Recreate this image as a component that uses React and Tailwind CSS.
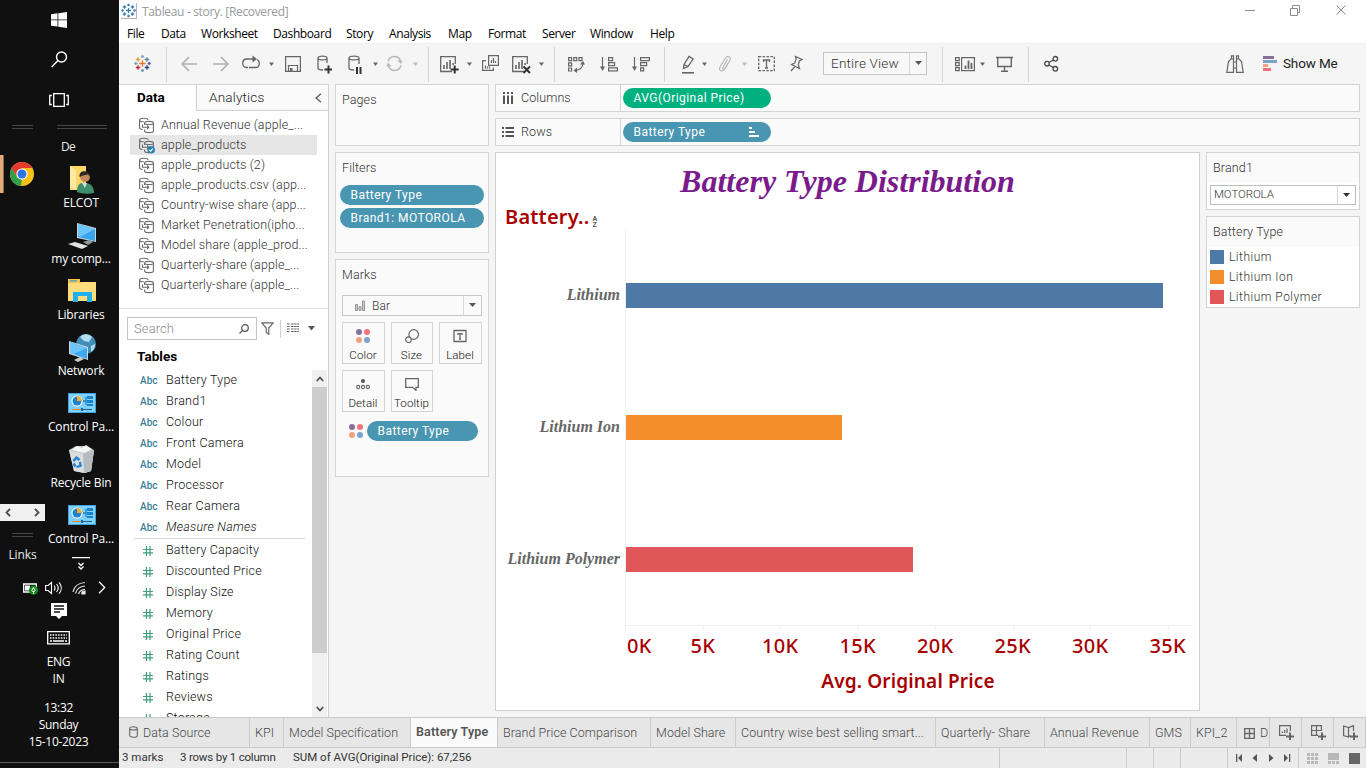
import React from "react";

const Svg = ({ w, h = 20, className = "", children, stroke = "#666", sw = 1.3, fill = "none" }) => (
  <svg width={w} height={h} viewBox={`0 0 ${w} ${h}`} fill={fill} stroke={stroke} strokeWidth={sw} className={`shrink-0 ${className}`}>
    {children}
  </svg>
);

const Caret = ({ className, color = "#666" }) => (
  <Svg w={5} className={className} stroke="none" fill={color}>
    <path d="M0 8.5h5L2.5 12z" />
  </Svg>
);

const Sep = ({ className }) => <div className={`-mt-[7px] h-[35px] w-px shrink-0 bg-[#d4d4d4] ${className}`} />;

/* ---------- Windows taskbar ---------- */

const MonitorShape = () => (
  <g stroke="none">
    <path d="M10 3l19 5v14l-19-4z" fill="#c9d2d8" />
    <path d="M11 4l17 5v12l-17-4z" fill="#35a5ef" />
    <path d="M11 4l17 5-15 8-2-1z" fill="#6cc4fb" />
    <path d="M16 22l6-2 4 2-5 3z" fill="#8d989e" />
    <path d="M1 24l7-2 13 4-6 3z" fill="#dfe3e6" />
  </g>
);

const desktopIcons = {
  user: (
    <g stroke="none">
      <path d="M3 2h16v24H3z" fill="#fbd867" />
      <path d="M3 2l6 4v20l-6-3z" fill="#ffeaa0" />
      <circle cx="18" cy="13" r="5" fill="#c08a5c" />
      <path d="M12.500 13c-1-8 11-7 10.500 0l-2-2.500-5 1z" fill="#2f2a26" />
      <path d="M10 28c0-7 3-10 8-9 6 0 9 4 9 10-5 1-12 1-17-1z" fill="#3f8f6d" />
      <path d="M15 19l3 5 2-5z" fill="#d8ded8" />
    </g>
  ),
  computer: <MonitorShape />,
  folder: (
    <g stroke="none">
      <path d="M1 3h12v3h16v19H1z" fill="#f5c644" />
      <path d="M1 7h12l2-1h14v19H1z" fill="#fddd7d" />
      <path d="M3 4h7v1.500H3z" fill="#56a5d8" />
      <path d="M6 16h19v10h-5v-6h-9v6H6z" fill="#1fb0f0" />
    </g>
  ),
  network: (
    <g stroke="none">
      <circle cx="19" cy="12" r="10" fill="#3f8fb9" />
      <path d="M13 5c4-4 9-3 12 0l-3 5-5-1zM24 14l4-2c0 3-1 6-4 8z" fill="#b3dcef" />
      <path d="M2 9l19 6v13L2 22z" fill="#cfd8dc" />
      <path d="M3 10l17 6v11L3 21z" fill="#3aa8f2" />
      <path d="M3 10l17 6-13 6-4-1z" fill="#6bc4fa" />
      <path d="M7 28l6-3 4 2-6 3z" fill="#c5ccd0" />
    </g>
  ),
  control: (
    <g stroke="none">
      <path d="M1 5h28v20H1z" fill="#3fa4e0" />
      <path d="M2 6h26v18H2z" fill="#7fd0fa" />
      <circle cx="10" cy="13" r="5.500" fill="#fff" />
      <circle cx="10" cy="13" r="4.500" fill="#1c84cf" />
      <path d="M10 13V8a5 5 0 0 1 5 5z" fill="#f7a928" />
      <path d="M20 8h6v3h-6zm0 4h6v3h-6zm0 4h6v2h-6z" fill="#1c84cf" />
      <path d="M16 13h3v-4M19 12v5" stroke="#1c84cf" fill="none" />
      <path d="M5 21h9v1H5z" fill="#f08a1d" />
      <path d="M16 21h9v1h-9zM14 20h2v3h-2z" fill="#1464b0" />
    </g>
  ),
  bin: (
    <g stroke="none">
      <path d="M2 6l7-4 9 0 9 4-3 21-6 2-11-2z" fill="#c3c8cb" />
      <path d="M2 6l14 4 11-4-3 21-7 2-10-2z" fill="#dadddf" />
      <path d="M16 10l11-4-3 21-7 2z" fill="#b7bcc0" />
      <path d="M5 6l5-4 5 2 4-3 6 4-8 4z" fill="#f4f5f5" />
      <path d="M6.500 17l3-3.500 3 2.500M13 18l.5 4-4 1M8.500 22.500L6.500 19.500" stroke="#1f7fd1" strokeWidth="2.300" fill="none" />
    </g>
  ),
};

const desktop = [
  ["user", "ELCOT"],
  ["computer", "my comp..."],
  ["folder", "Libraries"],
  ["network", "Network"],
  ["control", "Control Pa..."],
  ["bin", "Recycle Bin"],
  ["control", "Control Pa..."],
];

const Grip = ({ className }) => <div className={`h-1 shrink-0 border-y border-[#454545] ${className}`} />;

function Taskbar() {
  return (
    <aside className="flex h-[768px] w-[119px] shrink-0 flex-col overflow-hidden bg-[#101010] font-['Open_Sans','Noto_Sans',sans-serif] text-[12px] text-white">
      <div className="flex h-[118px] shrink-0 flex-col items-center pt-[12px] pr-[1px]">
        <Svg w={16} h={16} stroke="none" fill="#fff">
          <path d="M0 2.300L6.500 1.300v6.200H0zM7.300 1.200L16 0v7.500H7.300zM0 8.300h6.500v6.300L0 13.700zM7.300 8.300H16V16l-8.700-1.200z" />
        </Svg>
        <Svg w={17} h={17} stroke="#fff" sw={1.400} className="mt-[23px]">
          <circle cx="10.500" cy="6" r="5" />
          <path d="M7 9.500L.7 16" />
        </Svg>
        <Svg w={20} h={14} stroke="#fff" className="mt-[25px]">
          <path d="M4.700.7h10.600v12.600H4.700zM2.800 2.500H.7v9h2.100M17.200 2.500h2.100v9h-2.100" />
        </Svg>
      </div>
      <div className="flex h-[458px] shrink-0">
        <div className="flex w-[43px] shrink-0 flex-col pt-[7px]">
          <Grip className="ml-3 w-[21px]" />
          <div className="mt-[26px] flex h-[38px] items-center">
            <div className="h-full w-[4px] border-r border-[#8a6a4c] bg-[#e0ab78]" />
            <Svg w={24} h={24} stroke="none" className="ml-[6px]">
              <circle cx="12" cy="12" r="12" fill="#fbc116" />
              <path d="M1.600 6A12 12 0 0 1 22.400 6H12L6.800 15z" fill="#e53b2e" />
              <path d="M1.600 6L6.800 15 12 18l-1 6A12 12 0 0 1 1.600 6z" fill="#2ca14c" />
              <path d="M11.300 24L17.200 15 12 18z" fill="#fbc116" />
              <circle cx="12" cy="12" r="5.600" fill="#fff" />
              <circle cx="12" cy="12" r="4.500" fill="#2a75e6" />
            </Svg>
          </div>
          <div className="mt-[311px] flex h-[17px] w-[45px] shrink-0 items-center justify-between bg-[#f0f0f0] px-[5px]">
            <Svg w={6} h={9} stroke="#505050" sw={1.900}><path d="M5 .8L1.500 4.500 5 8.200" /></Svg>
            <Svg w={6} h={9} stroke="#505050" sw={1.900}><path d="M1 .8l3.500 3.700L1 8.200" /></Svg>
          </div>
          <Grip className="ml-3 mt-[12px] w-[21px]" />
          <div className="mt-[9px] ml-[2px] text-center leading-[18px] tracking-[-0.1px] text-[#e8e8e8]">Links</div>
        </div>
        <div className="flex w-[76px] shrink-0 flex-col pt-[7px]">
          <Grip className="ml-[14px] w-[50px]" />
          <div className="mt-[9px] ml-[18px] whitespace-nowrap leading-[18px] tracking-[-0.6px] text-[#e8e8e8]">De</div>
          {desktop.map(([icon, label], i) => (
            <div key={i} className="flex h-[56px] shrink-0 flex-col items-center pt-[8px]">
              <Svg w={30} h={30} className="ml-[2px]">{desktopIcons[icon]}</Svg>
              <div className="whitespace-nowrap leading-[17px] tracking-[-0.15px]">{label}</div>
            </div>
          ))}
          <div className="flex flex-col items-center pt-[9px]">
            <Svg w={18} h={15} stroke="#fff"><path d="M0 .7h18M6.500 6l2.500 2.500L11.500 6M6.500 9.500L9 12l2.500-2.500" /></Svg>
          </div>
        </div>
      </div>
      <div className="flex h-[23px] shrink-0 items-center pl-[23px]">
        <Svg w={16} h={14} stroke="#fff">
          <path d="M.7 3h12.600v8H.7z" /><path d="M2 4.500h5v5H2z" fill="#fff" stroke="none" />
          <circle cx="10.500" cy="9.200" r="4.600" fill="#118a1c" stroke="none" />
          <path d="M10.500 6.500l1.800 3-1.800 1.500-1.800-1.500zM10.500 10v3" strokeWidth="1" />
        </Svg>
        <Svg w={17} h={14} stroke="#fff" sw={1.100} className="ml-[6px]">
          <path d="M.6 4.500h2.600L6.500 1.500v11L3.200 9.500H.6zM9 4.500c1.300 1.500 1.300 3.500 0 5M11.500 3c2.200 2.500 2.200 5.500 0 8M14 1.300c3 3.500 3 8 0 11.400" />
        </Svg>
        <Svg w={14} h={14} stroke="#ddd" sw={1.200} className="ml-[10px]">
          <path d="M1 11C2 6 6 2 13 1.500M3.500 12.500c1-4 4-7 9.500-7.500M6.500 13c.7-2.500 3-4.300 6.500-4.600M9.500 13c.5-1 1.500-1.500 3.500-1.700" /><path d="M10 13v-2l3-1v3z" fill="#fff" />
        </Svg>
        <Svg w={8} h={13} stroke="#fff" sw={1.300} className="ml-[12px]"><path d="M1 .8l5.700 5.700L1 12.200" /></Svg>
      </div>
      <div className="flex flex-1 flex-col items-center pt-[4px]">
        <Svg w={16} h={16} stroke="none" fill="#fff" className="mr-[1px]">
          <path d="M0 0h16v13h-5l-3 3-3-3H0z" /><path d="M3 3h10M3 6h10M3 9h6" stroke="#101010" />
        </Svg>
        <Svg w={23} h={14} stroke="#fff" className="mt-[12px] mr-[2px]">
          <path d="M.7.7h21.600v12.100H.7z" /><path d="M3 4h17M3 7h17" strokeDasharray="1.500 1.200" /><path d="M3 10h2M6 10h11M18 10h2" />
        </Svg>
        <div className="mt-[8px] mr-[2px] text-center leading-[17px] tracking-[-0.3px]">ENG<br />IN</div>
        <div className="mt-[12px] mr-[2px] text-center leading-[17px] tracking-[-0.3px]">13:32<br />Sunday<br />15-10-2023</div>
        <div className="mt-[12px] h-px w-full bg-[#5a5a5a]" />
      </div>
    </aside>
  );
}

/* ---------- Window chrome ---------- */

const Plus = ({ x, y, s = 2.5, c }) => <path d={`M${x - s} ${y}h${2 * s}M${x} ${y - s}v${2 * s}`} stroke={c} />;

function TitleBar() {
  const c = "#3c7fb1";
  return (
    <header className="flex h-[24px] shrink-0 items-start bg-white">
      <div className="ml-[2px] mt-[3px] flex h-4 w-4 items-center justify-center border-r border-b border-[#b5b5b5]">
        <Svg w={15} h={15} sw={1.3}>
          <Plus x={7.5} y={7.5} s={2.5} c={c} />
          <Plus x={3.5} y={4} s={1.7} c={c} /><Plus x={11.500} y={4} s={1.7} c={c} />
          <Plus x={3.5} y={11} s={1.7} c={c} /><Plus x={11.500} y={11} s={1.7} c={c} />
          <Plus x={7.5} y={2} s={1.3} c={c} /><Plus x={7.5} y={13} s={1.3} c={c} />
          <Plus x={1.5} y={7.5} s={1.3} c={c} /><Plus x={13.500} y={7.5} s={1.3} c={c} />
        </Svg>
      </div>
      <div className="ml-[5px] mt-[3px] font-['Open_Sans',sans-serif] text-[12px] leading-[18px] tracking-[-0.33px] text-[#999]">Tableau - story. [Recovered]</div>
      <Svg w={104} h={14} stroke="#8a8a8a" sw={1} className="ml-auto mr-[18px] mt-[4px]">
        <path d="M1 6.500h10M46.500 4.500h7v7h-7zM48.500 4.500v-3h7v7h-2M92.500 1.500l9 9M101.500 1.500l-9 9" />
      </Svg>
    </header>
  );
}

const menus = [
  ["File", "w-[34px]"], ["Data", "w-[40px]"], ["Worksheet", "w-[72px]"], ["Dashboard", "w-[73px]"], ["Story", "w-[43px]"],
  ["Analysis", "w-[59px]"], ["Map", "w-[40px]"], ["Format", "w-[54px]"], ["Server", "w-[48px]"], ["Window", "w-[60px]"], ["Help", "w-[40px]"],
];

const ChartBox = () => (
  <>
    <path d="M12 17.500H.7V2.600h14.600V10" />
    <path d="M4 15v-4M7 15V8M10 15V6M13 11V9" strokeWidth="1.600" />
  </>
);

function Toolbar() {
  return (
    <div className="flex h-[41px] shrink-0 items-start border-t border-[#eeeeee] bg-[#f5f5f5] pt-[10px]">
      <Svg w={17} className="ml-[15px]" sw={1.3}>
        <Plus x={8.5} y={9.500} s={3.2} c="#e8762c" />
        <Plus x={4} y={5.500} s={2.2} c="#e8a03c" /><Plus x={13} y={5.500} s={2.2} c="#5b879b" />
        <Plus x={4} y={13.500} s={2.2} c="#c72035" /><Plus x={13} y={13.500} s={2.2} c="#1f457e" />
        <Plus x={8.5} y={2.500} s={1.6} c="#8aa5c0" /><Plus x={8.5} y={16.500} s={1.6} c="#7199a6" />
        <Plus x={1.8} y={9.500} s={1.6} c="#6da5b8" /><Plus x={15.200} y={9.500} s={1.6} c="#59579b" />
      </Svg>
      <Sep className="ml-[15px]" />
      <Svg w={16} className="ml-[14px]" stroke="#b0b0b0" sw={1.700}><path d="M16 10H1.500M8 3L1.200 10 8 17" /></Svg>
      <Svg w={16} className="ml-[16px]" stroke="#b0b0b0" sw={1.700}><path d="M0 10h14.500M8 3l6.800 7L8 17" /></Svg>
      <Svg w={18} className="ml-[13px]"><path d="M6 13.500H4.500c-5 0-5-8.500 0-8.500H13M15 5.500c3.500 1.500 3 8-1.500 8H7" /><path d="M10.500 1.500l4.500 3.500-4.500 3.500z" fill="#666" stroke="none" /></Svg>
      <Caret className="ml-[9px]" />
      <Svg w={16} className="ml-[11px]" sw={1.2}><path d="M.6 2.600h14.800v14.800H.6zM3.500 17v-5.500h9V17" /><path d="M5 14h2.500v3H5z" fill="#666" stroke="none" /></Svg>
      <Svg w={15} className="ml-[16px]">
        <path d="M10 9V4c0-2.500-9-2.500-9 0v10c0 1.500 3 2 5 2M1 4c0 2.500 9 2.500 9 0" /><path d="M11.500 11.500v8M7.500 15.500h8" stroke="#333" strokeWidth="2" />
      </Svg>
      <Svg w={14} className="ml-[16px]">
        <path d="M11 10V4C11 1.500 1 1.500 1 4v10c0 1.500 2 2 5 2M1 4c0 2.500 10 2.500 10 0" /><path d="M9 13v7M12.500 13v7" stroke="#333" strokeWidth="2" />
      </Svg>
      <Caret className="ml-[11px]" />
      <Svg w={17} className="ml-[8px]" stroke="#b8b8b8" sw={1.5}>
        <path d="M2 7.500C4 1 12.500 1 14.500 7M15 11.500C13 18 4.500 18 2.500 12" /><path d="M11.500 6.500h5L15 10zM.5 12.500L2 8.500l3.500 4z" fill="#b8b8b8" stroke="none" />
      </Svg>
      <Caret className="ml-[10px]" color="#bbb" />
      <Sep className="ml-[10px]" />
      <Svg w={19} className="ml-[11px]"><ChartBox /><path d="M14.700 11.500v8M10.700 15.500h8" stroke="#333" strokeWidth="2" /></Svg>
      <Caret className="ml-[8px]" />
      <Svg w={17} className="ml-[10px]" sw={1.2}>
        <path d="M6.600 1.600h9.800v9.800H6.600zM4 6.600H.6v9.800h10.800V13.500M9.500 9V6M11.500 9V4M13.500 9V7M3.500 14.500v-3M5.500 14.500v-2M7.500 14.500v-2" />
      </Svg>
      <Svg w={19} className="ml-[13px]"><ChartBox /><path d="M11.500 12.500l6.500 6.500M18 12.500L11.500 19" stroke="#333" strokeWidth="2" /></Svg>
      <Caret className="ml-[8px]" />
      <Sep className="ml-[10px]" />
      <Svg w={17} className="ml-[13px]" sw={1.2}>
        <path d="M.6 3.600h3v3h-3zM5.800 3.600h3v3h-3zM11 3.600h3v3h-3zM.6 8.800h3v3h-3zM.6 14h3v3h-3zM7 16.500c4 0 8-3 8-7" />
        <path d="M12 10.500l3-3.500 2 3.500zM9 13.500L5.500 16.500 9 19z" fill="#666" stroke="none" />
      </Svg>
      <Svg w={18} className="ml-[15px]" sw={1.2}>
        <path d="M2.500 3v12M8.600 3.600h4v3h-4zM8.600 8.600h6v3h-6zM8.600 13.800h8.800v3H8.600z" /><path d="M0 12.500h5L2.500 17z" fill="#666" stroke="none" />
      </Svg>
      <Svg w={18} className="ml-[14px]" sw={1.2}>
        <path d="M2.500 3v12M8.600 3.600h8.800v3H8.600zM8.600 8.600h6v3h-6zM8.600 13.800h3v3h-3z" /><path d="M0 12.500h5L2.500 17z" fill="#666" stroke="none" />
      </Svg>
      <Sep className="ml-[14px]" />
      <Svg w={13} className="ml-[16px]"><path d="M2.500 14.500L3 10.500 8 2.500 12 5 7 12.500zM3 10.500l4 2" /><path d="M1 18.800h12" strokeWidth="1.600" /></Svg>
      <Caret className="ml-[8px]" />
      <Svg w={13} className="ml-[11px]" stroke="#b8b8b8" sw={1.2}><path d="M9.500 5L5 13.500c-1 2 1.500 2.500 2.300 1L12 6c1.300-3-2.500-5-4.500-2L2 13c-2 4 2.500 5 4.300 2.500L10 9" /></Svg>
      <Caret className="ml-[11px]" color="#bbb" />
      <Svg w={17} className="ml-[11px]"><path d="M.7 2.700h15.600v14H.7z" strokeDasharray="2.500 1.400" /><path d="M5.500 8V6h6v2M8.500 6v8M7 14h3" /></Svg>
      <Svg w={13} className="ml-[15px]" sw={1.2}><path d="M5.500 2.500l6.500 3-2.700 1.500-1 4 1.200 3.500-8-4 3.200-1.500 1.500-4zM5 12.500L1 17" /></Svg>
      <div className="-mt-[2px] ml-[20px] flex h-[23px] w-[104px] shrink-0 items-center border border-[#c4c4c4] bg-[#f8f8f8]">
        <span className="w-[85px] pl-[7px] text-[13.5px] leading-none font-light tracking-[0.2px] text-[#333]">Entire View</span>
        <span className="flex h-full flex-1 items-center justify-center border-l border-[#d8d8d8]">
          <Svg w={7} h={5} stroke="none" fill="#555"><path d="M0 0h7L3.500 4z" /></Svg>
        </span>
      </div>
      <Sep className="ml-[15px]" />
      <Svg w={20} className="ml-[12px]" sw={1.2}>
        <path d="M.6 3.600h3.600v3H.6zM.6 8.600h3.600v3H.6zM.6 13.600h3.600v3H.6zM6.600 3.600h12.800v13H6.600z" /><path d="M10.500 15v-3.500M13.500 15V6.500M16.500 15V9" strokeWidth="1.800" />
      </Svg>
      <Caret className="ml-[5px]" />
      <Svg w={17} className="ml-[11px]" sw={1.4}><path d="M0 3.500h17M1.700 3.500v9h13.600v-9M8.500 12.500v5M5 17.300h7" /></Svg>
      <Sep className="ml-[15px]" />
      <Svg w={15} className="ml-[15px]" stroke="#4a4a4a" sw={1.3}><circle cx="3" cy="9.700" r="2.300" /><circle cx="11.300" cy="4.800" r="2.300" /><circle cx="11.300" cy="14.800" r="2.300" /><path d="M5 8.500l4.300-2.500M5 11l4.300 2.500" /></Svg>
      <Svg w={18} className="ml-[167px]" sw={1.2}>
        <path d="M.8 18.300L2.500 7.500 5 5h2.500v13.300zM17.200 18.300L15.500 7.500 13 5h-2.500v13.300zM5.500 5V1.800h2V5M12.500 5V1.800h-2V5M7.500 8h3M7.500 14h3" />
      </Svg>
      <Svg w={14} className="ml-[19px]" stroke="none">
        <path d="M0 2h11v3H0z" fill="#87709b" /><path d="M0 6h14v3H0z" fill="#7ba3ce" /><path d="M0 10h5v3H0z" fill="#f2a27b" /><path d="M0 14h8v3H0z" fill="#f4727f" />
      </Svg>
      <span className="ml-[6px] text-[13.5px] leading-[19px] tracking-[-0.15px] text-[#222]">Show Me</span>
    </div>
  );
}

/* ---------- Data pane ---------- */

const sources = [
  "Annual Revenue (apple_...", "apple_products", "apple_products (2)", "apple_products.csv (app...", "Country-wise share (app...",
  "Market Penetration(ipho...", "Model share (apple_prod...", "Quarterly-share (apple_...", "Quarterly-share (apple_...",
];
const dims = ["Battery Type", "Brand1", "Colour", "Front Camera", "Model", "Processor", "Rear Camera", "Measure Names"];
const measures = ["Battery Capacity", "Discounted Price", "Display Size", "Memory", "Original Price", "Rating Count", "Ratings", "Reviews", "Storage"];

const SourceIcon = ({ active }) => (
  <Svg w={16} h={17} sw={1.1} stroke="#6b6b6b">
    <path d="M3.500 12.500C1.500 12.300.6 11.800.6 11V3C.6.7 9 .7 9 3M.6 3c0 1.300 2.400 1.800 4.200 1.800M5.600 6c0-2.200 8.800-2.200 8.800 0v8c0 2.200-8.800 2.200-8.800 0v-1.500M5.600 6v2M5.600 6c0 2 8.800 2 8.800 0M3.500 7.500v2.700h6M8 8.500l1.800 1.700L8 12" />
    {active && (
      <><circle cx="12.200" cy="12.800" r="3.800" fill="#2f82ac" stroke="none" /><path d="M10.500 12.800l1.200 1.300 2.200-2.600" stroke="#fff" /></>
    )}
  </Svg>
);

function DataPane() {
  return (
    <section className="flex h-full w-[210px] shrink-0 flex-col border-r border-[#d0d0d0] bg-white">
      <div className="flex h-[27px] shrink-0 border-t border-[#d4d4d4]">
        <div className="w-[77px] pl-[18px] text-[13.5px] leading-[25px] font-bold tracking-[0px] text-black">Data</div>
        <div className="flex flex-1 items-center border-b border-l border-[#d0d0d0] bg-[#fafafa] pl-[12px] text-[13.5px] font-light tracking-[0.2px] text-[#222]">
          <span>Analytics</span>
          <Svg w={7} h={10} className="mr-[6px] ml-auto" stroke="#555" sw={1.200}><path d="M6 .8L1 5l5 4.200" /></Svg>
        </div>
      </div>
      <div className="flex h-[198px] shrink-0 flex-col border-b border-[#dcdcdc] pt-[4px] pl-[11px]">
        {sources.map((s, i) => (
          <div key={i} className={`flex h-5 w-[187px] shrink-0 items-center pl-[9px] text-[12.5px] font-light whitespace-nowrap text-[#333] ${i === 1 ? "bg-[#e6e6e6]" : ""}`}>
            <SourceIcon active={i === 1} />
            <span className="ml-[6px] tracking-[0.12px]">{s}</span>
          </div>
        ))}
      </div>
      <div className="flex h-[39px] shrink-0 items-center pl-[8px]">
        <div className="flex h-[23px] w-[130px] items-center border border-[#c4c4c4] pr-[7px] pl-[6px] text-[13px] font-light tracking-[0.1px] text-[#8a8a8a]">
          <span>Search</span>
          <Svg w={10} h={10} className="ml-auto" stroke="#555" sw={1.2}><circle cx="6" cy="4" r="3.300" /><path d="M3.600 6.400L.5 9.500" /></Svg>
        </div>
        <Svg w={13} h={13} className="ml-[4px]" sw={1.2}><path d="M.8.8h11.400L7.800 6v6.300l-2.600-2V6z" /></Svg>
        <div className="ml-[6px] h-[18px] w-px bg-[#d0d0d0]" />
        <Svg w={12} h={11} className="ml-[6px]" sw={1.100}><path d="M0 1h3M4 1h8M0 3.500h3M4 3.500h8M0 6h3M4 6h8M0 8.500h3M4 8.500h8" strokeDasharray="2.600 .5" /></Svg>
        <Svg w={7} h={5} className="ml-[9px]" stroke="none" fill="#555"><path d="M0 0h7L3.500 4.500z" /></Svg>
      </div>
      <div className="h-[22px] shrink-0 pl-[18px] text-[13.5px] leading-[17px] font-bold tracking-[0.05px] text-black">Tables</div>
      <div className="flex min-h-0 flex-1 overflow-hidden">
        <div className="w-[193px] shrink-0 overflow-hidden">
          {dims.map((d) => (
            <div key={d} className="flex h-[21px] items-center pl-[21px] whitespace-nowrap">
              <span className="w-[26px] text-[10px] font-medium tracking-[0px] text-[#3b7f97]">Abc</span>
              <span className={`text-[12.5px] font-light tracking-[0.25px] text-[#111] ${d === "Measure Names" ? "italic" : ""}`}>{d}</span>
            </div>
          ))}
          <div className="mb-px ml-[15px] h-px w-[171px] bg-[#d9d9d9]" />
          {measures.map((d) => (
            <div key={d} className="flex h-[21px] items-center pl-[24px] whitespace-nowrap">
              <Svg w={10} h={10} stroke="#3f9e7c" sw={1.200}><path d="M3.500 0v10M7 0v10M0 3.500h10M0 6.800h10" /></Svg>
              <span className="ml-[13px] text-[12.5px] font-light tracking-[0.2px] text-[#111]">{d}</span>
            </div>
          ))}
        </div>
        <div className="flex w-[15px] flex-col items-center bg-[#f0f0f0]">
          <div className="flex h-[17px] items-center"><Svg w={8} h={6} stroke="#505050" sw={1.800}><path d="M.8 5L4 1.500 7.200 5" /></Svg></div>
          <div className="h-[266px] w-full bg-[#cdcdcd]" />
          <div className="mt-auto flex h-[17px] items-center"><Svg w={8} h={6} stroke="#505050" sw={1.800}><path d="M.8 1L4 4.500 7.200 1" /></Svg></div>
        </div>
      </div>
    </section>
  );
}

/* ---------- Cards ---------- */

const Card = ({ className, children }) => <div className={`shrink-0 border border-[#d4d4d4] bg-[#fafafa] ${className}`}>{children}</div>;

const Pill = ({ className, children }) => (
  <div className={`flex h-5 shrink-0 items-center rounded-full pl-[10.5px] text-[12px] leading-none tracking-[0.45px] whitespace-nowrap text-white ${className}`}>{children}</div>
);

const Dots = () => (
  <Svg w={14} h={14} stroke="none"><circle cx="3" cy="3" r="3" fill="#87709b" /><circle cx="11" cy="3" r="3" fill="#f4727f" /><circle cx="3" cy="11" r="3" fill="#f2a27b" /><circle cx="11" cy="11" r="3" fill="#7ba3ce" /></Svg>
);

const markButtons = [
  ["Color", <Dots />],
  ["Size", <Svg w={14} h={14} sw={1.2}><circle cx="8.700" cy="5.500" r="4.800" /><circle cx="3.500" cy="10.700" r="2.800" fill="#fafafa" /></Svg>],
  ["Label", <Svg w={14} h={14} sw={1.3}><path d="M1 1.500h12v11H1zM5 6V4.700h4V6M7 4.700V10M6 10h2" /></Svg>],
  ["Detail", <Svg w={14} h={14} sw={1.1}><circle cx="7" cy="4" r="2" fill="#555" stroke="none" /><circle cx="2.200" cy="10" r="1.600" /><circle cx="7" cy="10" r="1.600" /><circle cx="11.800" cy="10" r="1.600" /></Svg>],
  ["Tooltip", <Svg w={14} h={14} sw={1.3}><path d="M.7 1.700h12.600v8.600H11v3l-3.500-3H.7z" /></Svg>],
];

function Cards() {
  return (
    <div className="flex w-[154px] shrink-0 flex-col gap-[6px] text-[12.5px] font-light tracking-[0.1px] text-[#333]">
      <Card className="h-[62px] pt-[7px] pl-[6px] leading-[16px]">Pages</Card>
      <Card className="h-[101px] px-[4px] pt-[7px]">
        <div className="pl-[2px] leading-[16px]">Filters</div>
        <Pill className="mt-[9px] bg-[#4996b2] font-normal">Battery Type</Pill>
        <Pill className="mt-[3px] bg-[#4996b2] font-normal">Brand1: MOTOROLA</Pill>
      </Card>
      <Card className="h-[218px] px-[6px] pt-[7px]">
        <div className="leading-[16px]">Marks</div>
        <div className="mt-[12px] flex h-[21px] w-[140px] items-center border border-[#c8c8c8] bg-[#fafafa]">
          <Svg w={10} h={11} className="ml-[12px]" stroke="#999" sw={1}><path d="M.5 4.500h2v6h-2zM4 6.500h2v4H4zM7.500 1h2v9.500h-2z" fill="#ccc" /></Svg>
          <span className="ml-[7px] text-[12px]">Bar</span>
          <span className="ml-auto flex h-full w-[18px] items-center justify-center border-l border-[#d8d8d8]">
            <Svg w={7} h={5} stroke="none" fill="#555"><path d="M0 0h7L3.500 4z" /></Svg>
          </span>
        </div>
        <div className="mt-[6px] grid grid-cols-[43px_42px_43px] gap-x-[6px] gap-y-[6px]">
          {markButtons.map(([label, icon]) => (
            <div key={label} className="flex h-[42px] flex-col items-center border border-[#d4d4d4] pt-[6px] pr-[1px] text-[11.5px] font-light text-[#111]">
              {icon}
              <span className="mt-[5px] leading-[14px] tracking-[0.1px]">{label}</span>
            </div>
          ))}
        </div>
        <div className="mt-[9px] flex items-center pl-[7px]">
          <Dots />
          <Pill className="ml-[4px] w-[111px] bg-[#4996b2] font-normal">Battery Type</Pill>
        </div>
      </Card>
    </div>
  );
}

const Shelf = ({ icon, label, children }) => (
  <Card className="flex h-[28px] items-center">
    <div className="flex h-full w-[125px] items-center border-r border-[#d4d4d4] pl-[6px] text-[12.5px] font-light tracking-[0.1px] text-[#333]">
      {icon}<span className="ml-[7px]">{label}</span>
    </div>
    {children}
  </Card>
);

/* ---------- Visualisation ---------- */

const marks = [
  { name: "Lithium", width: 537, color: "bg-[#4e79a7]" },
  { name: "Lithium Ion", width: 216, color: "bg-[#f28e2b]" },
  { name: "Lithium Polymer", width: 287, color: "bg-[#e15759]" },
];
const ticks = ["5K", "10K", "15K", "20K", "25K", "30K", "35K"];

function Chart() {
  return (
    <div className="flex h-[559px] w-[705px] shrink-0 flex-col overflow-hidden border border-[#d0d0d0] bg-white">
      <h1 className="h-[53px] shrink-0 pt-[9px] text-center font-['Liberation_Serif',serif] text-[32px] leading-[38px] font-bold text-[#7a1b8c] italic">Battery Type Distribution</h1>
      <div className="flex h-[23px] shrink-0 items-center pl-[9px] font-['Noto_Sans',sans-serif] text-[20px] leading-none font-semibold tracking-[0.2px] text-[#a80000]">
        <span className="-mt-[2px]">Battery..</span>
        <span className="mt-[8px] ml-[3px] flex flex-col font-['Roboto',sans-serif] text-[7px] leading-[6px] font-bold text-[#555]"><i className="not-italic">A</i><i className="not-italic">Z</i></span>
      </div>
      {marks.map((m) => (
        <div key={m.name} className="flex h-[132px] shrink-0 items-center">
          <div className="w-[124px] text-right font-['Liberation_Serif',serif] text-[16px] font-bold whitespace-nowrap text-[#666] italic">{m.name}</div>
          <div className="ml-[5px] flex h-full items-center border-l border-[#f0f0f0]">
            <div className={`h-[25px] ${m.color}`} style={{ width: m.width }} />
          </div>
        </div>
      ))}
      <div className="ml-[129px] h-[5px] w-[566px] shrink-0 border-t border-[#f0f0f0]">
        <div className="flex">
          {["0K", ...ticks].map((t, i) => <span key={t} className={`h-[4px] shrink-0 border-l border-[#f0f0f0] ${i === 7 ? "w-[20px]" : "w-[77.5px]"}`} />)}
        </div>
      </div>
      <div className="ml-[129px] flex w-[582px] shrink-0 pt-[4px] font-['Noto_Sans',sans-serif] text-[20px] leading-[24px] font-medium tracking-[0.3px] text-[#a80000]">
        <span className="w-[39px] shrink-0 pl-[2px]">0K</span>
        {ticks.map((t) => <span key={t} className="w-[77.5px] shrink-0 text-center">{t}</span>)}
      </div>
      <div className="mt-[11px] ml-[129px] w-[566px] text-center font-['Noto_Sans',sans-serif] text-[19px] leading-[24px] font-semibold tracking-[0.15px] text-[#a80000]">Avg. Original Price</div>
    </div>
  );
}

const legend = [["Lithium", "bg-[#4e79a7]"], ["Lithium Ion", "bg-[#f28e2b]"], ["Lithium Polymer", "bg-[#e15759]"]];

function SideCards() {
  return (
    <div className="flex w-[154px] shrink-0 flex-col gap-[6px] text-[12.5px] font-light tracking-[0.15px] text-[#333]">
      <div className="h-[58px] border border-[#d4d4d4] bg-white">
        <div className="h-[29px] bg-[#fafafa] pt-[7px] pl-[6px] leading-[16px]">Brand1</div>
        <div className="mt-[3px] ml-[3px] flex h-[20px] w-[146px] items-center border border-[#bdbdbd] pl-[3px] text-[11.5px] tracking-[-0.1px]">
          MOTOROLA
          <span className="ml-auto flex h-full w-[18px] items-center justify-center border-l border-[#d8d8d8]"><Svg w={7} h={5} stroke="none" fill="#333"><path d="M0 0h7L3.500 4z" /></Svg></span>
        </div>
      </div>
      <div className="h-[92px] border border-[#d4d4d4] bg-white">
        <div className="h-[30px] bg-[#fafafa] pt-[7px] pl-[6px] leading-[16px]">Battery Type</div>
        {legend.map(([n, c]) => (
          <div key={n} className="flex h-5 items-center pl-[3px] text-[12px] tracking-[0.5px]"><span className={`mr-[5px] h-[14px] w-[14px] ${c}`} />{n}</div>
        ))}
      </div>
    </div>
  );
}

/* ---------- Bottom ---------- */

const tabs = [
  ["KPI", "w-[34px]"], ["Model Specification", "w-[127px]"], ["Battery Type", "w-[87px]"], ["Brand Price Comparison", "w-[153px]"], ["Model Share", "w-[85px]"],
  ["Country wise best selling smart...", "w-[200px]"], ["Quarterly- Share", "w-[109px]"], ["Annual Revenue", "w-[105px]"], ["GMS", "w-[41px]"], ["KPI_2", "w-[46px]"],
];

const GridIcon = () => <Svg w={11} h={11} sw={1.3}><path d="M.7.7h9.600v9.600H.7zM5.500.7v9.600M.7 5.500h9.600" /></Svg>;

function SheetTabs() {
  return (
    <div className="flex h-[31px] shrink-0 overflow-hidden border-y border-[#cacaca] bg-[#e6e6e6] text-[12.5px] font-light tracking-[0.06px] whitespace-nowrap text-[#484848]">
      <div className="flex w-[131px] shrink-0 items-center border-r border-[#cacaca] pt-px pl-[10px]">
        <Svg w={9} h={12} sw={1.1} className="-mt-[3px]"><path d="M.7 2.500c0-2.400 7.600-2.400 7.600 0v7c0 2.400-7.600 2.400-7.600 0zM.7 2.500c0 2 7.600 2 7.600 0" /></Svg>
        <span className="ml-[5px]">Data Source</span>
      </div>
      {tabs.map(([t, w]) => (
        <div key={t} className={`flex shrink-0 items-center border-r border-[#cacaca] pl-[5px] ${w} ${t === "Battery Type" ? "bg-[#fafafa] pb-px font-semibold tracking-[0.15px] text-[#555]" : "pt-px"}`}>{t}</div>
      ))}
      <div className="flex w-[33px] shrink-0 items-center overflow-hidden border-r border-[#cacaca] pt-px pl-[7px]"><GridIcon /><span className="ml-[5px]">D</span></div>
      <div className="flex w-[32px] shrink-0 items-center border-r border-[#cacaca] pl-[9px]">
        <Svg w={15} h={15} sw={1.2}><path d="M7 10.400H.6V.6h10.800V6M3.500 8V6.500M5.700 8V5M8 8V3.500" /><path d="M11 7.500v8M7 11.500h8" strokeWidth="2" /></Svg>
      </div>
      <div className="flex w-[32px] shrink-0 items-center border-r border-[#cacaca] pl-[9px]">
        <Svg w={15} h={15} sw={1.2}><path d="M7 10.400H.6V.6h9.800V6M5.500.6v9.800M.6 5.500h9.800" /><path d="M11 7.500v8M7 11.500h8" strokeWidth="2" /></Svg>
      </div>
      <div className="flex flex-1 items-center border-r border-[#cacaca] pl-[9px]">
        <Svg w={15} h={15} sw={1.2}><path d="M7 10.500L5.500 12 .6 10.500V1L5.500 2.500 10.500.6V6M5.500 2.500V12" /><path d="M11 7.500v8M7 11.500h8" strokeWidth="2" /></Svg>
      </div>
    </div>
  );
}

function StatusBar() {
  return (
    <footer className="flex h-5 shrink-0 items-center bg-[#ebebeb] pl-[3px] text-[11.5px] whitespace-nowrap text-[#333]">
      <span className="w-[58px]">3 marks</span>
      <span className="w-[113px] tracking-[-0.2px]">3 rows by 1 column</span>
      <span className="tracking-[-0.02px]">SUM of AVG(Original Price): 67,256</span>
      <div className="ml-auto flex h-full">
        <div className="w-[127px] border-l border-[#cacaca]" />
        <div className="w-[27px] border-l border-[#cacaca]" />
        <div className="w-[27px] border-l border-[#cacaca]" />
        <div className="w-[47px] border-l border-[#cacaca]" />
        <div className="flex w-[71px] items-center border-l border-[#cacaca] pl-[8px]">
          <Svg w={56} h={8} stroke="none" fill="#555"><path d="M0 0h1.300v8H0zM6 0v8L2 4zM21 0v8l-4.500-4zM33 0v8l4.500-4zM48 0v8l4-4zM53 0h1.300v8H53z" /></Svg>
        </div>
        <div className="flex w-[68px] items-center border-l border-[#cacaca] pl-[8px]">
          <Svg w={54} h={11} stroke="none" fill="#b8b8b8">
            <path d="M0 0h3v3H0zM4 0h3v3H4zM8 0h3v3H8zM0 4h3v3H0zM4 4h3v3H4zM8 4h3v3H8zM0 8h3v3H0zM4 8h3v3H4zM8 8h3v3H8zM21 0h11v7H21zM21 8h3v3h-3zM25 8h3v3h-3zM29 8h3v3h-3z" />
            <path d="M42 0h11v11H42z" fill="#666" />
          </Svg>
        </div>
      </div>
    </footer>
  );
}

export default function App() {
  return (
    <div className="flex h-[768px] w-[1366px] overflow-hidden bg-[#f5f5f5]">
      <Taskbar />
      <div className="flex min-w-0 flex-1 flex-col font-['Roboto',sans-serif]">
        <TitleBar />
        <nav className="flex h-[19px] shrink-0 bg-white pl-[8px] font-['Open_Sans',sans-serif] text-[12px] leading-[19px] tracking-[-0.4px] text-black">
          {menus.map(([m, w]) => <span key={m} className={w}>{m}</span>)}
        </nav>
        <Toolbar />
        <main className="flex h-[633px] shrink-0">
          <DataPane />
          <div className="flex min-w-0 flex-1 gap-[6px] pl-[6px]">
            <Cards />
            <div className="flex w-[865px] shrink-0 flex-col gap-[6px]">
              <Shelf label="Columns" icon={<Svg w={12} h={13} stroke="none" fill="#555"><path d="M1 0h2v2H1zM5 0h2v2H5zM9 0h2v2H9zM1 3.500h2V12H1zM5 3.500h2V12H5zM9 3.500h2V12H9z" /></Svg>}>
                <Pill className="ml-[2px] w-[148px] bg-[#00b180]">AVG(Original Price)</Pill>
              </Shelf>
              <Shelf label="Rows" icon={<Svg w={12} h={12} stroke="none" fill="#555"><path d="M0 1h2v2H0zM3.500 1H12v2H3.500zM0 5h2v2H0zM3.500 5H12v2H3.500zM0 9h2v2H0zM3.500 9H12v2H3.500z" /></Svg>}>
                <Pill className="ml-[2px] w-[148px] bg-[#4996b2]">
                  Battery Type
                  <Svg w={10} h={10} stroke="none" fill="#fff" className="mr-[12px] ml-auto"><path d="M0 0h3v2H0zM0 4h6v2H0zM0 8h10v2H0z" /></Svg>
                </Pill>
              </Shelf>
              <div className="flex gap-[6px]">
                <Chart />
                <SideCards />
              </div>
            </div>
          </div>
        </main>
        <SheetTabs />
        <StatusBar />
      </div>
    </div>
  );
}
